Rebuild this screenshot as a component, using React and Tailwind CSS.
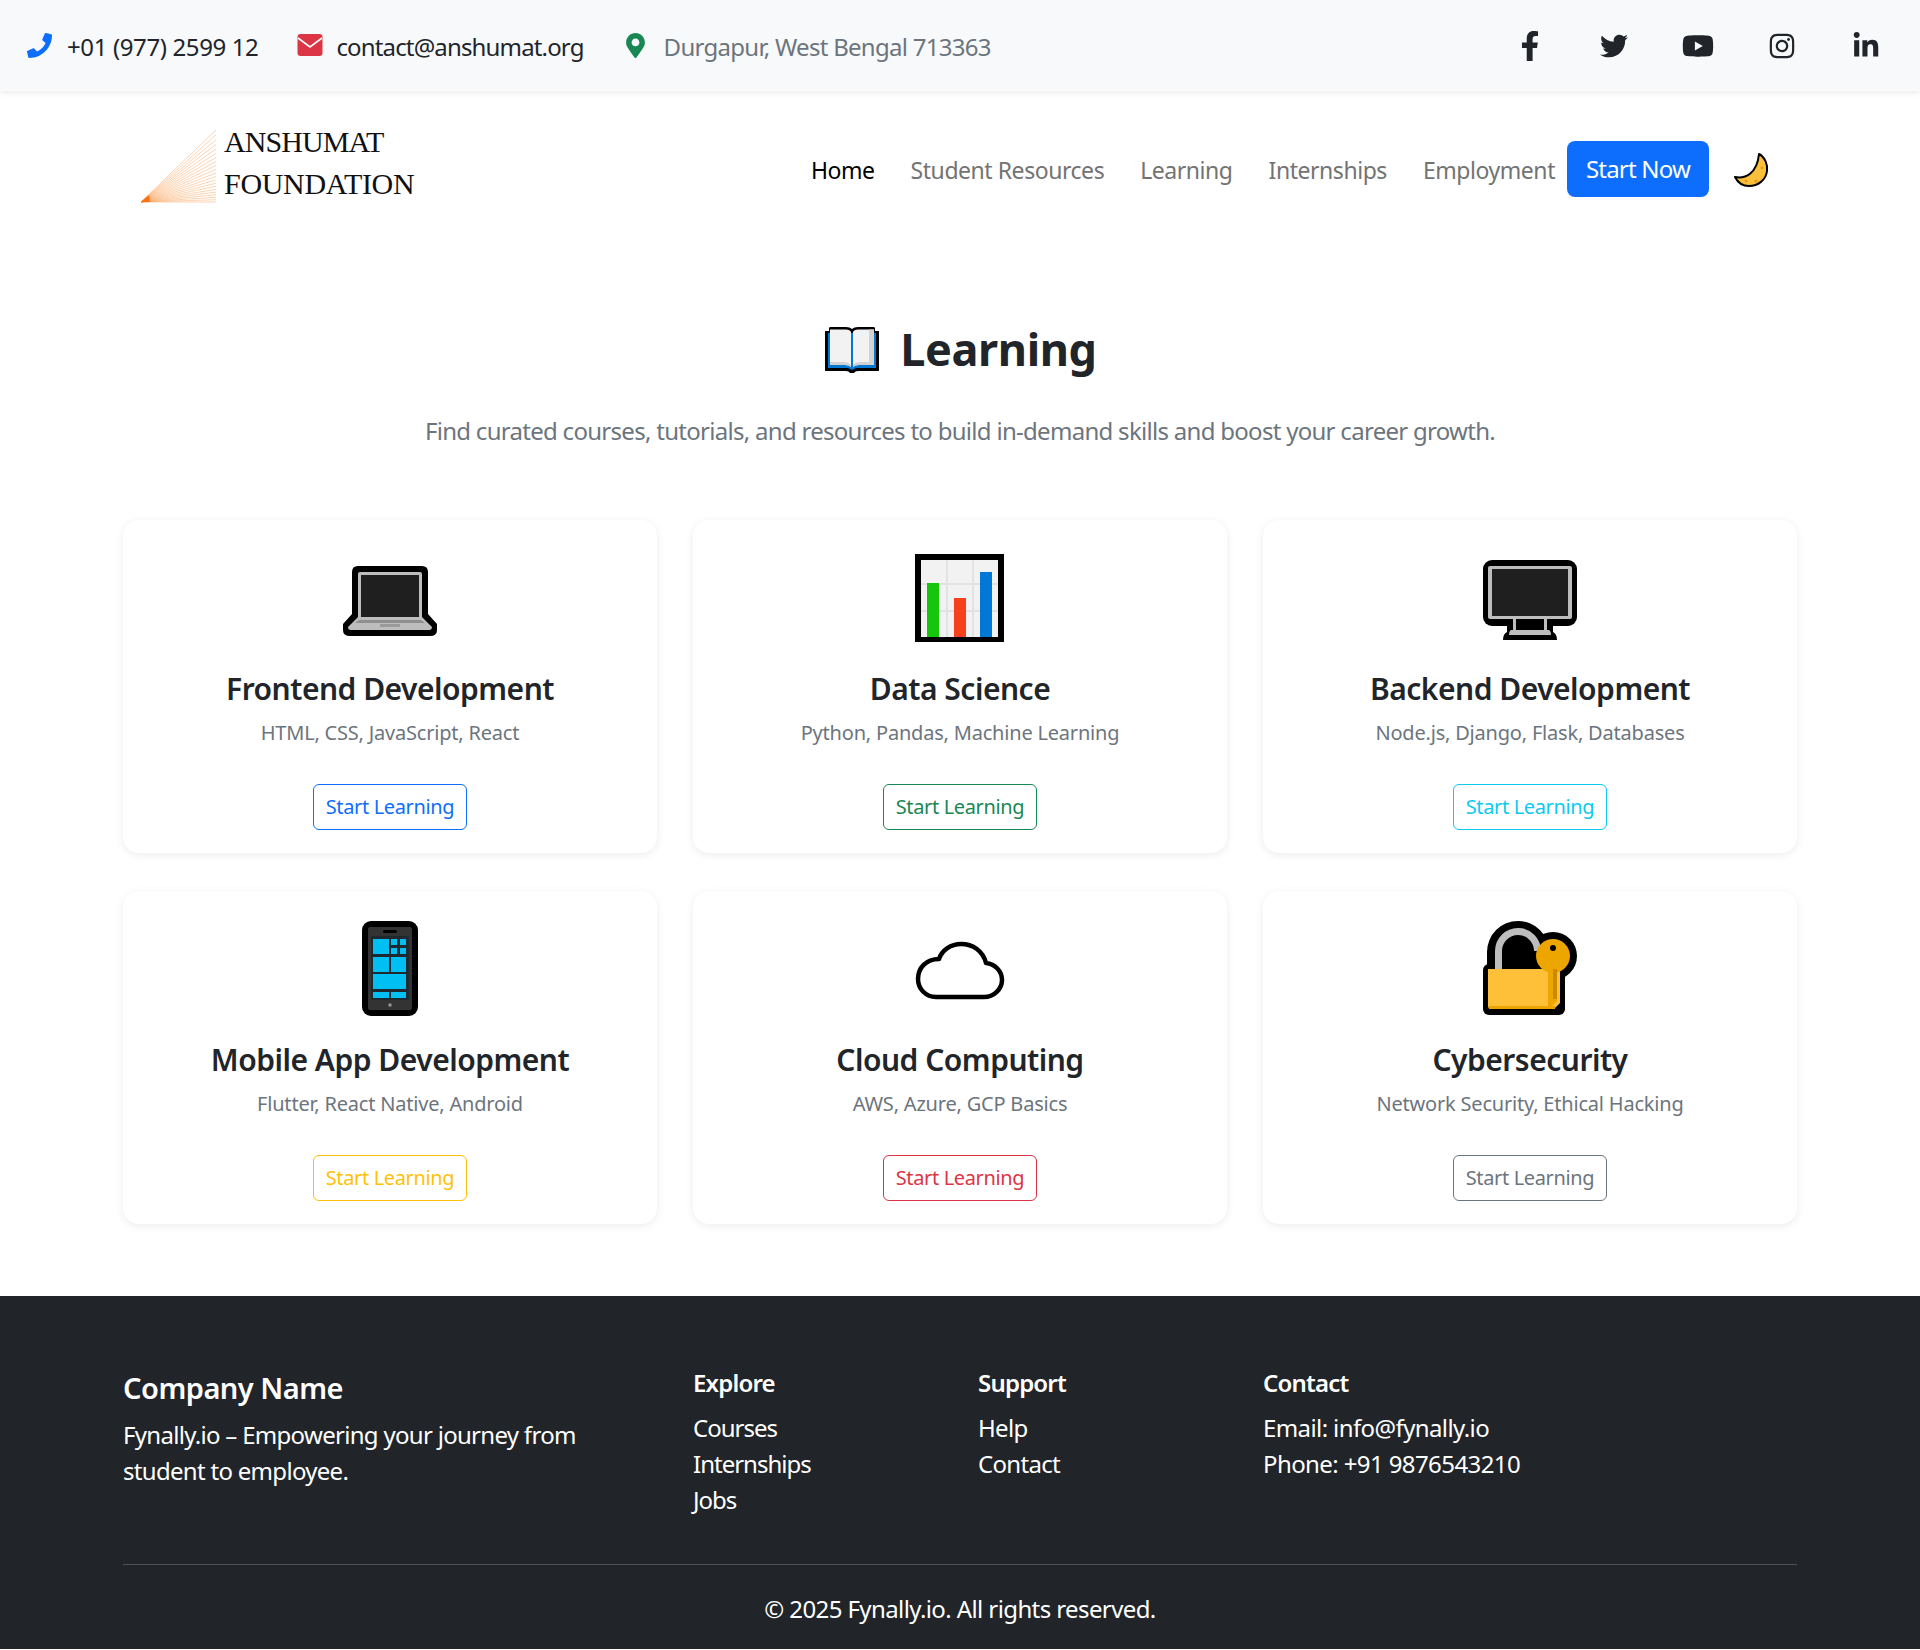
import React from "react";
import {
  FaPhoneAlt,
  FaMapMarkerAlt,
  FaFacebookF,
  FaTwitter,
  FaYoutube,
  FaInstagram,
  FaLinkedinIn,
} from "react-icons/fa";

const Logo = () => {
  const lines = [];
  for (let i = 0; i <= 20; i++) {
    const y = i * i * 0.07 + i * 2.2;
    lines.push(<line key={i} x1="1" y1="74" x2="76" y2={74 - y} stroke="#fb923c" strokeOpacity="0.8" strokeWidth="0.5" />);
  }
  return (
    <svg viewBox="0 0 76 75" className="w-[76px] h-[75px]">
      {lines}
      <path d="M1 74 L10 74 L9 67 Z" fill="#f97316" />
    </svg>
  );
};

const MailIcon = () => (
  <svg viewBox="0 0 26 24" className="ml-[39px] w-[26px] h-6">
    <rect x="0.5" y="1" width="25" height="22" rx="3" fill="#dc3545" />
    <path d="M1 5 L13 14 L25 5" fill="none" stroke="#fff" strokeWidth="1.6" />
  </svg>
);

const Moon = () => (
  <svg viewBox="0 0 36 36" className="w-9 h-9">
    <path d="M2 26 C12 28 24 23 26 3 C32 6 35 14 34 20 C33 29 25 35 16 35 C10 35 5 32 2 26Z" fill="#fbbf3c" stroke="#000" strokeWidth="2" strokeLinejoin="round" />
    <circle cx="13" cy="30" r="1.3" fill="#e09a1a" />
    <circle cx="23" cy="30" r="1.6" fill="#e09a1a" />
    <circle cx="29" cy="17" r="1.4" fill="#e09a1a" />
  </svg>
);

const Book = () => (
  <svg viewBox="0 0 58 58" className="w-[58px] h-[58px]">
    <path d="M2 11 H6 V8 Q6 7 8 7 H23 Q27 7 29 9 Q31 7 35 7 H50 Q52 7 52 8 V11 H56 V51 H35 Q32 51 31 53 H27 Q26 51 23 51 H2Z" fill="#000" />
    <path d="M5 13 H53 V48 H33 L29 50 L25 48 H5Z" fill="#0078d4" />
    <path d="M7 13 V9.5 H23 Q27 9.5 28 12 V47 Q26 45 22 45 H7Z" fill="#f2f2f2" />
    <path d="M51 13 V9.5 H35 Q31 9.5 30 12 V47 Q32 45 36 45 H51Z" fill="#f2f2f2" />
    <path d="M46 9.5 H51 V45 H36 Q32 45 30 47 V45 Q33 42 37 42 H46Z" fill="#d2d2d2" />
    <path d="M7 42 H21 Q25 42 28 45 V47 Q26 45 22 45 H7Z" fill="#d2d2d2" />
  </svg>
);

const LaptopIcon = () => (
  <svg viewBox="0 0 96 96" className="w-24 h-24">
    <path d="M10 22 Q10 16 16 16 H80 Q86 16 86 22 V64 L95 74 V80 Q95 86 88 86 H8 Q1 86 1 80 V74 L10 64Z" fill="#000" />
    <path d="M16 24 Q16 22 18 22 H78 Q80 22 80 24 V67 L90 77 Q90 80 87 80 H9 Q6 80 6 77 L16 67Z" fill="#bdbdbd" />
    <rect x="19" y="25" width="58" height="42" fill="#1f1f1f" />
    <path d="M17 70 H79 L83 73 H13Z" fill="#8f8f8f" />
    <rect x="38" y="74" width="20" height="3" fill="#9a9a9a" />
  </svg>
);

const ChartIcon = () => (
  <svg viewBox="0 0 96 96" className="w-24 h-24">
    <rect x="3" y="4" width="89" height="88" fill="#000" />
    <rect x="9" y="10" width="77" height="77" fill="#f2f2f2" />
    <path d="M35 10 V87 M61 10 V87 M9 34 H86 M9 61 H86" stroke="#e2e2e2" strokeWidth="2" />
    <rect x="15" y="33" width="12" height="54" fill="#16c60c" />
    <rect x="42" y="48" width="12" height="39" fill="#f7411a" />
    <rect x="68" y="22" width="12" height="65" fill="#0078d7" />
  </svg>
);

const MonitorIcon = () => (
  <svg viewBox="0 0 96 96" className="w-24 h-24">
    <rect x="1" y="10" width="94" height="66" rx="9" fill="#000" />
    <path d="M25 74 H71 V82 Q75 84 75 90 H21 Q21 84 25 82Z" fill="#000" />
    <rect x="6" y="16" width="84" height="53" rx="2" fill="#bdbdbd" />
    <rect x="10" y="19" width="76" height="47" fill="#1f1f1f" />
    <rect x="31" y="69" width="3" height="11" fill="#bdbdbd" />
    <rect x="62" y="69" width="3" height="11" fill="#bdbdbd" />
    <path d="M29 80 H67 Q69 81 69 85 H27 Q27 81 29 80Z" fill="#bdbdbd" />
  </svg>
);

const PhoneIcon = () => (
  <svg viewBox="0 0 96 96" className="w-24 h-24">
    <rect x="20" y="0" width="56" height="95" rx="9" fill="#000" />
    <rect x="26" y="6" width="44" height="83" rx="2" fill="#333" />
    <rect x="41" y="9" width="14" height="3" rx="1.5" fill="#000" />
    <rect x="29" y="15" width="38" height="64" fill="#1f2a30" />
    <g fill="#00bff3">
      <rect x="31" y="18" width="16" height="15" />
      <rect x="49" y="18" width="6" height="6" />
      <rect x="58" y="18" width="6" height="6" />
      <rect x="49" y="27" width="6" height="6" />
      <rect x="58" y="27" width="6" height="6" />
      <rect x="31" y="36" width="16" height="15" />
      <rect x="49" y="36" width="15" height="15" />
      <rect x="31" y="53" width="33" height="15" />
      <rect x="31" y="71" width="16" height="6" />
      <rect x="49" y="71" width="15" height="6" />
    </g>
    <rect x="46.5" y="82.5" width="3" height="3" fill="#999" />
  </svg>
);

const CloudIcon = () => (
  <svg viewBox="0 0 96 96" className="w-24 h-24">
    <path d="M24 76 H72 C82 76 90 68 90 59 C90 50 83 43 74 42 C71 30 61 23 49 23 C39 23 30 29 27 38 C14 38 6 47 6 58 C6 68 14 76 24 76Z" fill="#fff" stroke="#000" strokeWidth="4.5" strokeLinejoin="round" />
  </svg>
);

const LockIcon = () => (
  <svg viewBox="0 0 96 96" className="w-24 h-24">
    <path d="M5 48 V31 A31 31 0 0 1 67 31 V48Z" fill="#000" />
    <rect x="1" y="43" width="82" height="51" rx="6" fill="#000" />
    <circle cx="71" cy="35" r="24" fill="#000" />
    <path d="M16.5 48 V30 A19.5 19.5 0 0 1 55.5 30" fill="none" stroke="#bdbdbd" strokeWidth="7" />
    <path d="M6 48 H78 V82 L72 88 H9 Q6 88 6 85Z" fill="#fdc038" />
    <rect x="7" y="85" width="66" height="3" fill="#eda600" />
    <circle cx="71" cy="35" r="17" fill="#eda600" />
    <path d="M66 48 H75 V80 L70 85 H66Z" fill="#eda600" />
    <rect x="71" y="48" width="4" height="30" fill="#c98a00" />
    <circle cx="71" cy="27" r="3" fill="#000" />
  </svg>
);

const courses = [
  { title: "Frontend Development", sub: "HTML, CSS, JavaScript, React", Icon: LaptopIcon, btn: "text-[#0d6efd] border-[#0d6efd]" },
  { title: "Data Science", sub: "Python, Pandas, Machine Learning", Icon: ChartIcon, btn: "text-[#198754] border-[#198754]" },
  { title: "Backend Development", sub: "Node.js, Django, Flask, Databases", Icon: MonitorIcon, btn: "text-[#0dcaf0] border-[#0dcaf0]" },
  { title: "Mobile App Development", sub: "Flutter, React Native, Android", Icon: PhoneIcon, btn: "text-[#ffc107] border-[#ffc107]" },
  { title: "Cloud Computing", sub: "AWS, Azure, GCP Basics", Icon: CloudIcon, btn: "text-[#dc3545] border-[#dc3545]" },
  { title: "Cybersecurity", sub: "Network Security, Ethical Hacking", Icon: LockIcon, btn: "text-[#6c757d] border-[#6c757d]" },
];

const CourseCard = ({ title, sub, Icon, btn }) => (
  <div className="h-[333px] bg-white rounded-2xl shadow-[0_2px_8px_rgba(0,0,0,0.08)] flex flex-col items-center pt-[30px]">
    <Icon />
    <h3 className="mt-[25px] text-[30px] leading-[36px] font-semibold text-[#212529] tracking-[-0.5px]">{title}</h3>
    <p className="mt-[11px] text-[20px] leading-[30px] text-[#6c757d] tracking-[-0.2px]">{sub}</p>
    <button className={`mt-[36px] w-[154px] h-[46px] rounded-md border bg-white text-[20px] tracking-[-0.36px] ${btn}`}>
      Start Learning
    </button>
  </div>
);

const SocialIcon = ({ children }) => (
  <span className="w-7 h-7 flex items-center justify-center">{children}</span>
);

const FooterCol = ({ title, items, spacing }) => (
  <div className="pt-[1px]">
    <h5 className="text-[24px] leading-[36px] font-semibold text-white tracking-[-0.8px] mb-[9px]">{title}</h5>
    {items.map((item) => (
      <p key={item} className={`text-[24px] leading-[36px] text-white ${spacing}`}>{item}</p>
    ))}
  </div>
);

export default function App() {
  return (
    <div className="min-h-[1650px] bg-white font-['Noto_Sans',sans-serif] text-[#212529]">
      <div className="h-[91px] bg-[#f8f9fa] shadow-[0_2px_6px_rgba(0,0,0,0.08)] relative flex items-center justify-between pl-[27px] pr-[40px]">
        <div className="flex items-center text-[24px] pt-[2px]">
          <FaPhoneAlt className="w-[25px] h-[25px] text-[#0d6efd] -scale-x-100 -mt-[3px]" />
          <span className="ml-[15px] tracking-[-0.38px]">+01 (977) 2599 12</span>
          <span className="-mt-[3px]"><MailIcon /></span>
          <span className="ml-[13px] tracking-[-0.85px]">contact@anshumat.org</span>
          <FaMapMarkerAlt className="ml-[39px] w-[25px] h-[25px] text-[#198754] -mt-[3px]" />
          <span className="ml-[16px] text-[#6c757d] tracking-[-0.72px]">Durgapur, West Bengal 713363</span>
        </div>
        <div className="flex items-center gap-14 text-[#212529]">
          <SocialIcon><FaFacebookF className="w-[30px] h-[30px] shrink-0" /></SocialIcon>
          <SocialIcon><FaTwitter className="w-7 h-7 shrink-0" /></SocialIcon>
          <SocialIcon><FaYoutube className="w-8 h-8 shrink-0" /></SocialIcon>
          <SocialIcon><FaInstagram className="w-7 h-7 shrink-0" /></SocialIcon>
          <SocialIcon><FaLinkedinIn className="w-7 h-7 shrink-0" /></SocialIcon>
        </div>
      </div>

      <nav className="flex items-center justify-between pl-[140px] pr-[151px] pt-[35px]">
        <div className="flex items-center">
          <Logo />
          <div className="ml-2 -mt-[5px] font-['Liberation_Serif',serif] text-[30px] leading-[42px] text-[#111]">
            <div className="tracking-[-0.9px]">ANSHUMAT</div>
            <div className="tracking-[-0.3px]">FOUNDATION</div>
          </div>
        </div>
        <div className="flex items-center text-[23px] tracking-[-0.45px] text-[#737373] mt-[6px]">
          <a className="pt-[3px] text-black">Home</a>
          <a className="pt-[3px] ml-9">Student Resources</a>
          <a className="pt-[3px] ml-9">Learning</a>
          <a className="pt-[3px] ml-9">Internships</a>
          <a className="pt-[3px] ml-9">Employment</a>
          <button className="ml-3 w-[142px] h-14 rounded-lg bg-[#0d6efd] text-white text-[24px] tracking-[-0.8px]">Start Now</button>
          <span className="ml-6"><Moon /></span>
        </div>
      </nav>

      <main className="mx-[123px]">
        <div className="mt-[114px] flex items-center justify-center">
          <Book />
          <h1 className="ml-[19px] text-[45px] leading-[60px] font-bold text-[#212529] tracking-[-0.4px]">Learning</h1>
        </div>
        <p className="mt-[34px] text-center text-[24px] leading-[36px] text-[#6c757d] tracking-[-0.71px]">
          Find curated courses, tutorials, and resources to build in-demand skills and boost your career growth.
        </p>
        <div className="mt-[71px] grid grid-cols-3 gap-x-9 gap-y-[38px]">
          {courses.map((c) => (
            <CourseCard key={c.title} {...c} />
          ))}
        </div>
      </main>

      <footer className="mt-[72px] h-[353px] bg-[#212529] px-[123px] pt-[68px]">
        <div className="grid grid-cols-[570px_285px_285px_1fr] h-[201px] border-b border-[#4d5154]">
          <div>
            <h4 className="text-[29px] leading-[48px] font-semibold text-white tracking-[-0.5px]">Company Name</h4>
            <p className="mt-[5px] w-[500px] text-[24px] leading-[36px] text-white tracking-[-0.7px]">
              Fynally.io – Empowering your journey from student to employee.
            </p>
          </div>
          <FooterCol title="Explore" spacing="tracking-[-1px]" items={["Courses", "Internships", "Jobs"]} />
          <FooterCol title="Support" spacing="tracking-[-0.7px]" items={["Help", "Contact"]} />
          <FooterCol title="Contact" spacing="tracking-[-0.6px]" items={["Email: info@fynally.io", "Phone: +91 9876543210"]} />
        </div>
        <p className="mt-[26px] text-center text-[24px] leading-[36px] text-white tracking-[-0.6px]">
          © 2025 Fynally.io. All rights reserved.
        </p>
      </footer>
    </div>
  );
}
